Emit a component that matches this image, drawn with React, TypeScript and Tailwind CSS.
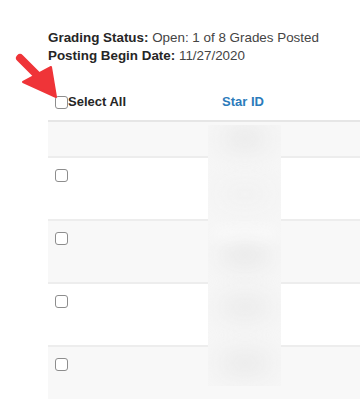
function Checkbox() {
  return <span className="block h-[13px] w-[13px] rounded-[3px] border border-[#8d8d8d] bg-white" />;
}

const rows = [
  { shaded: true, box: false, h: 'h-[36px]' },
  { shaded: false, box: true, h: 'h-[63px]' },
  { shaded: true, box: true, h: 'h-[63px]' },
  { shaded: false, box: true, h: 'h-[63px]' },
  { shaded: true, box: true, h: 'h-[63px]' },
];

function App() {
  return (
    <main
      className="relative h-[399px] w-[360px] overflow-hidden bg-white text-[13px] text-[#444444]"
      style={{ fontFamily: '"Liberation Sans", Arial, sans-serif' }}
    >
      <div className="pl-[48px] pt-[29px] text-[13.4px] leading-[18px]">
        <p>
          <span className="font-bold text-[#262626]">Grading Status:</span> Open: 1 of 8 Grades Posted
        </p>
        <p>
          <span className="font-bold text-[#262626]">Posting Begin Date:</span> 11/27/2020
        </p>
      </div>

      <div className="ml-[48px] mt-[22px]">
        <div className="flex h-[35px] items-center border-b-2 border-[#e6e6e6] pb-[3px]">
          <label className="flex w-[174px] items-center pl-[7px] font-bold text-[#262626]">
            <Checkbox />
            <span>Select All</span>
          </label>
          <span className="font-bold text-[#2b7bbb]">Star ID</span>
        </div>

        {rows.map((row, i) => (
          <div
            key={i}
            className={`${row.h} border-b-2 border-[#ededed] pl-[7px] pt-[11px] ${row.shaded ? 'bg-[#f8f8f8]' : 'bg-white'}`}
          >
            {row.box ? <Checkbox /> : null}
          </div>
        ))}
      </div>

      {/* blurred Star ID values */}
      <div className="absolute left-[208px] top-[125px] flex h-[261px] w-[73px] flex-col items-center overflow-hidden bg-[#f6f6f6]">
        <div className="mt-[6px] h-[16px] w-[44px] rounded-full bg-[#e4e4e4] blur-md" />
        <div className="mt-[40px] h-[14px] w-[46px] rounded-full bg-[#eeeeee] blur-md" />
        <div className="mt-[30px] h-[10px] w-[60px] bg-white blur-sm" />
        <div className="mt-[6px] h-[16px] w-[46px] rounded-full bg-[#e2e2e2] blur-md" />
        <div className="mt-[36px] h-[16px] w-[46px] rounded-full bg-[#e5e5e5] blur-md" />
        <div className="mt-[40px] h-[16px] w-[46px] rounded-full bg-[#e4e4e4] blur-md" />
      </div>

      {/* red pointer arrow */}
      <svg className="absolute left-0 top-0" width="70" height="110" viewBox="0 0 70 110">
        <line x1="20" y1="58" x2="38" y2="76" stroke="#ef3438" strokeWidth="8" strokeLinecap="round" />
        <polygon points="23,82 51,67 56,97" fill="#ef3438" strokeLinejoin="round" stroke="#ef3438" strokeWidth="2" />
      </svg>
    </main>
  );
}

export default App;
